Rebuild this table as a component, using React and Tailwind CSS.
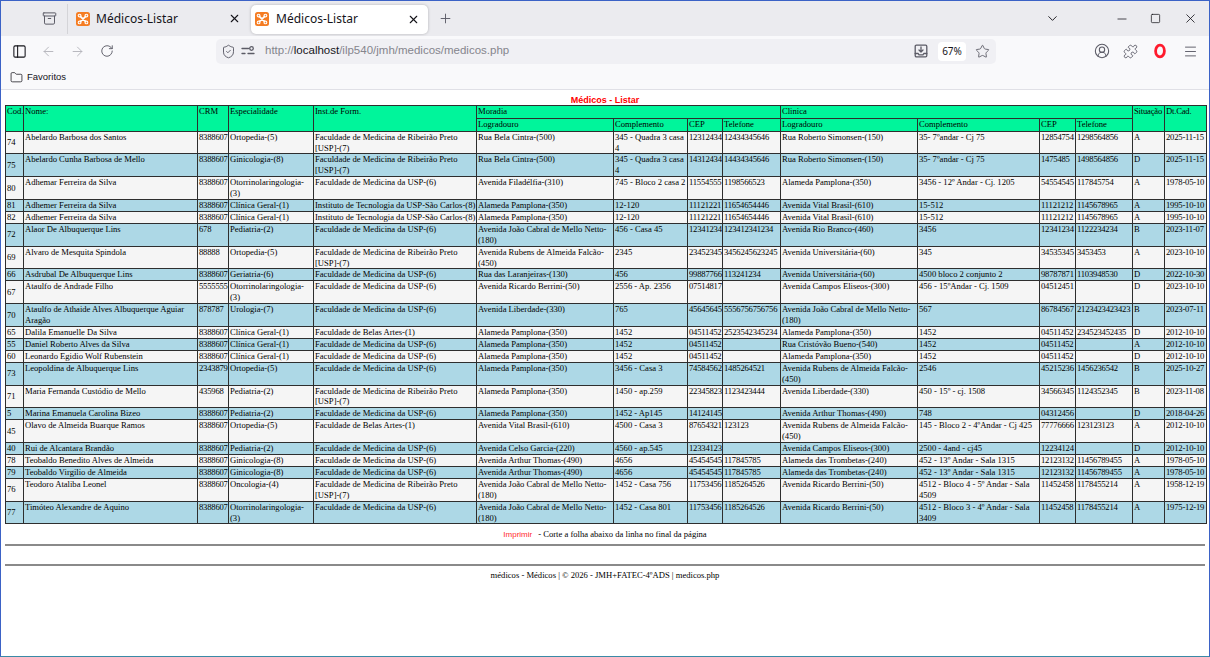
import React from "react";
import {
  Archive,
  X,
  Plus,
  ChevronDown,
  Minus,
  Square,
  PanelLeft,
  ArrowLeft,
  ArrowRight,
  RotateCw,
  ShieldCheck,
  Star,
  CircleUserRound,
  Puzzle,
  Menu,
  Folder,
} from "lucide-react";

const rows = [
  ["74","Abelardo Barbosa dos Santos","8388607","Ortopedia-(5)","Faculdade de Medicina de Ribeirão Preto [USP]-(7)","Rua Bela Cintra-(500)","345 - Quadra 3 casa 4","12312434","12434345646","Rua Roberto Simonsen-(150)","35- 7ºandar - Cj 75","12854754","1298564856","A","2025-11-15"],
  ["75","Abelardo Cunha Barbosa de Mello","8388607","Ginicologia-(8)","Faculdade de Medicina de Ribeirão Preto [USP]-(7)","Rua Bela Cintra-(500)","345 - Quadra 3 casa 4","14312434","14434345646","Rua Roberto Simonsen-(150)","35- 7ºandar - Cj 75","1475485","1498564856","D","2025-11-15"],
  ["80","Adhemar Ferreira da Silva","8388607","Otorrinolaringologia-(3)","Faculdade de Medicina da USP-(6)","Avenida Filadélfia-(310)","745 - Bloco 2 casa 2","11554555","1198566523","Alameda Pamplona-(350)","3456 - 12º Andar - Cj. 1205","54554545","117845754","A","1978-05-10"],
  ["81","Adhemer Ferreira da Silva","8388607","Clínica Geral-(1)","Instituto de Tecnologia da USP-São Carlos-(8)","Alameda Pamplona-(350)","12-120","11121221","11654654446","Avenida Vital Brasil-(610)","15-512","11121212","1145678965","A","1995-10-10"],
  ["82","Adhemer Ferreira da Silva","8388607","Clínica Geral-(1)","Instituto de Tecnologia da USP-São Carlos-(8)","Alameda Pamplona-(350)","12-120","11121221","11654654446","Avenida Vital Brasil-(610)","15-512","11121212","1145678965","A","1995-10-10"],
  ["72","Alaor De Albuquerque Lins","678","Pediatria-(2)","Faculdade de Medicina da USP-(6)","Avenida João Cabral de Mello Netto-(180)","456 - Casa 45","12341234","123412341234","Avenida Rio Branco-(460)","3456","12341234","1122234234","B","2023-11-07"],
  ["69","Alvaro de Mesquita Spindola","88888","Ortopedia-(5)","Faculdade de Medicina de Ribeirão Preto [USP]-(7)","Avenida Rubens de Almeida Falcão-(450)","2345","23452345","3456245623245","Avenida Universitária-(60)","345","34535345","3453453","A","2023-10-10"],
  ["66","Asdrubal De Albuquerque Lins","8388607","Geriatria-(6)","Faculdade de Medicina da USP-(6)","Rua das Laranjeiras-(130)","456","99887766","113241234","Avenida Universitária-(60)","4500 bloco 2 conjunto 2","98787871","1103948530","D","2022-10-30"],
  ["67","Ataulfo de Andrade Filho","5555555","Otorrinolaringologia-(3)","Faculdade de Medicina da USP-(6)","Avenida Ricardo Berrini-(50)","2556 - Ap. 2356","07514817","","Avenida Campos Eliseos-(300)","456 - 15ºAndar - Cj. 1509","04512451","","D","2023-10-10"],
  ["70","Ataulfo de Athaide Alves Albuquerque Aguiar Aragão","878787","Urologia-(7)","Faculdade de Medicina da USP-(6)","Avenida Liberdade-(330)","765","45645645","5556756756756","Avenida João Cabral de Mello Netto-(180)","567","86784567","2123423423423","B","2023-07-11"],
  ["65","Dalila Emanuelle Da Silva","8388607","Clínica Geral-(1)","Faculdade de Belas Artes-(1)","Alameda Pamplona-(350)","1452","04511452","2523542345234","Alameda Pamplona-(350)","1452","04511452","234523452435","D","2012-10-10"],
  ["55","Daniel Roberto Alves da Silva","8388607","Clínica Geral-(1)","Faculdade de Medicina da USP-(6)","Alameda Pamplona-(350)","1452","04511452","","Rua Cristóvão Bueno-(540)","1452","04511452","","A","2012-10-10"],
  ["60","Leonardo Egidio Wolf Rubenstein","8388607","Clínica Geral-(1)","Faculdade de Medicina da USP-(6)","Alameda Pamplona-(350)","1452","04511452","","Alameda Pamplona-(350)","1452","04511452","","D","2012-10-10"],
  ["73","Leopoldina de Albuquerque Lins","2343879","Ortopedia-(5)","Faculdade de Medicina da USP-(6)","Alameda Pamplona-(350)","3456 - Casa 3","74584562","1485264521","Avenida Rubens de Almeida Falcão-(450)","2546","45215236","1456236542","B","2025-10-27"],
  ["71","Maria Fernanda Custódio de Mello","435968","Pediatria-(2)","Faculdade de Medicina de Ribeirão Preto [USP]-(7)","Alameda Pamplona-(350)","1450 - ap.259","22345823","1123423444","Avenida Liberdade-(330)","450 - 15º - cj. 1508","34566345","1124352345","B","2023-11-08"],
  ["5","Marina Emanuela Carolina Bizeo","8388607","Pediatria-(2)","Faculdade de Medicina da USP-(6)","Alameda Pamplona-(350)","1452 - Ap145","14124145","","Avenida Arthur Thomas-(490)","748","04312456","","D","2018-04-26"],
  ["45","Olavo de Almeida Buarque Ramos","8388607","Ortopedia-(5)","Faculdade de Belas Artes-(1)","Avenida Vital Brasil-(610)","4500 - Casa 3","87654321","123123","Avenida Rubens de Almeida Falcão-(450)","145 - Bloco 2 - 4ºAndar - Cj 425","77776666","123123123","A","2012-10-10"],
  ["40","Rui de Alcantara Brandão","8388607","Pediatria-(2)","Faculdade de Medicina da USP-(6)","Avenida Celso Garcia-(220)","4560 - ap.545","12334123","","Avenida Campos Eliseos-(300)","2500 - 4and - cj45","12234124","","D","2012-10-10"],
  ["78","Teobaldo Benedito Alves de Almeida","8388607","Ginicologia-(8)","Faculdade de Medicina da USP-(6)","Avenida Arthur Thomas-(490)","4656","45454545","117845785","Alameda das Trombetas-(240)","452 - 13º Andar - Sala 1315","12123132","11456789455","A","1978-05-10"],
  ["79","Teobaldo Virgilio de Almeida","8388607","Ginicologia-(8)","Faculdade de Medicina da USP-(6)","Avenida Arthur Thomas-(490)","4656","45454545","117845785","Alameda das Trombetas-(240)","452 - 13º Andar - Sala 1315","12123132","11456789455","A","1978-05-10"],
  ["76","Teodoro Ataliba Leonel","8388607","Oncologia-(4)","Faculdade de Medicina de Ribeirão Preto [USP]-(7)","Avenida João Cabral de Mello Netto-(180)","1452 - Casa 756","11753456","1185264526","Avenida Ricardo Berrini-(50)","4512 - Bloco 4 - 5º Andar - Sala 4509","11452458","1178455214","A","1958-12-19"],
  ["77","Timóteo Alexandre de Aquino","8388607","Otorrinolaringologia-(3)","Faculdade de Medicina da USP-(6)","Avenida João Cabral de Mello Netto-(180)","1452 - Casa 801","11753456","1185264526","Avenida Ricardo Berrini-(50)","4512 - Bloco 3 - 4º Andar - Sala 3409","11452458","1178455214","A","1975-12-19"],
];

const numCols = [2, 7, 8, 11, 12, 13, 14];

const cell = "border border-[#2e2e2e] pl-px pr-0 py-0 align-top text-left font-normal";
const cellNum = "border border-[#2e2e2e] pl-px pr-0 py-0 align-top text-left font-normal whitespace-nowrap tracking-[-0.2px] overflow-hidden";
const cellMid = "border border-[#2e2e2e] pl-px pr-0 py-0 align-middle text-left font-normal whitespace-nowrap";

function Favicon() {
  return (
    <svg width="14" height="14" viewBox="0 0 14 14" className="shrink-0">
      <rect x="0" y="0" width="14" height="14" rx="2.5" fill="#f57c22" />
      <path d="M4.3 4.3 L9.7 9.7 M9.7 4.3 L4.3 9.7" stroke="#fff" strokeWidth="1.7" strokeLinecap="round" />
      <circle cx="3.6" cy="3.6" r="1.4" fill="none" stroke="#fff" strokeWidth="1.1" />
      <circle cx="10.4" cy="3.6" r="1.4" fill="none" stroke="#fff" strokeWidth="1.1" />
      <circle cx="3.6" cy="10.4" r="1.4" fill="none" stroke="#fff" strokeWidth="1.1" />
      <circle cx="10.4" cy="10.4" r="1.4" fill="none" stroke="#fff" strokeWidth="1.1" />
    </svg>
  );
}

function PermIcon() {
  return (
    <svg width="16" height="16" viewBox="0 0 16 16" fill="none" stroke="#5b5b66" strokeWidth="1.3" strokeLinecap="round">
      <path d="M2 5.5h6.5" />
      <circle cx="11.5" cy="5.5" r="1.8" />
      <path d="M2 10.5h3" />
      <path d="M8 10.5h6" />
    </svg>
  );
}

function DownloadIcon() {
  return (
    <svg width="16" height="16" viewBox="0 0 16 16" fill="none" stroke="#5b5b66" strokeWidth="1.3" strokeLinecap="round" strokeLinejoin="round">
      <rect x="2.2" y="2.2" width="11.6" height="11.6" rx="1.2" />
      <path d="M2.2 10.5h3l.8 1.3h4l.8-1.3h3" />
      <path d="M8 4v5M6 7l2 2 2-2" />
    </svg>
  );
}

function OperaIcon() {
  return (
    <svg width="14" height="16" viewBox="0 0 14 16">
      <ellipse cx="7" cy="8" rx="4.4" ry="5.8" fill="none" stroke="#ff1b2d" strokeWidth="2.8" />
    </svg>
  );
}

function Tab({ active }) {
  return (
    <div
      className={
        active
          ? "flex items-center w-[177px] h-[29px] bg-white rounded-[5px] shadow-[0_0_3px_rgba(0,0,0,0.25)] pl-[4px] pr-[8px]"
          : "flex items-center w-[178px] h-[29px] pl-[6px] pr-[7px]"
      }
    >
      <Favicon />
      <span className={active ? "ml-[7px] text-[12px] text-[#15141a] flex-1" : "ml-[6px] text-[12px] text-[#15141a] flex-1"}>
        Médicos-Listar
      </span>
      <X size={13} strokeWidth={2} className="text-[#15141a]" />
    </div>
  );
}

export default function App() {
  return (
    <div className="w-[1210px] h-[657px] overflow-hidden flex flex-col bg-white border border-[#3b62c6] border-b-[#3a8aa6] font-['Noto_Sans',sans-serif]">
      {/* Tab strip */}
      <div className="h-[35px] shrink-0 bg-[#ebebef] flex items-center">
        <div className="w-[38px]" />
        <div className="w-[20px] flex justify-center">
          <Archive size={15} strokeWidth={1.6} className="text-[#5b5b66]" />
        </div>
        <div className="ml-[8px] w-px h-[30px] bg-[#d4d4d8]" />
        <div className="ml-[2px]">
          <Tab />
        </div>
        <div className="ml-[3px] mt-[1px]">
          <Tab active />
        </div>
        <div className="ml-[9px] w-[16px] flex justify-center">
          <Plus size={15} strokeWidth={1.5} className="text-[#5b5b66]" />
        </div>
        <div className="flex-1" />
        <div className="w-[30px] flex justify-center">
          <ChevronDown size={15} strokeWidth={1.5} className="text-[#15141a]" />
        </div>
        <div className="w-[38px]" />
        <div className="w-[34px] flex justify-center">
          <Minus size={14} strokeWidth={1.3} className="text-[#15141a]" />
        </div>
        <div className="w-[32px] flex justify-center">
          <Square size={11} strokeWidth={1.6} className="text-[#15141a]" />
        </div>
        <div className="w-[38px] flex justify-center">
          <X size={15} strokeWidth={1.3} className="text-[#15141a]" />
        </div>
      </div>

      {/* Toolbar */}
      <div className="h-[30px] shrink-0 bg-[#f9f9fb] flex items-center">
        <div className="w-[4px]" />
        <div className="w-[29px] flex justify-center">
          <PanelLeft size={15} strokeWidth={1.7} className="text-[#15141a]" />
        </div>
        <div className="w-[29px] flex justify-center">
          <ArrowLeft size={15} strokeWidth={1.5} className="text-[#b4b4bb]" />
        </div>
        <div className="w-[29px] flex justify-center">
          <ArrowRight size={15} strokeWidth={1.5} className="text-[#b4b4bb]" />
        </div>
        <div className="w-[29px] flex justify-center">
          <RotateCw size={14} strokeWidth={1.6} className="text-[#5b5b66]" />
        </div>
        <div className="w-[95px]" />
        <div className="w-[780px] h-[25px] rounded-[5px] bg-[#f0f0f4] flex items-center">
          <div className="w-[4px]" />
          <div className="w-[16px] flex justify-center">
            <ShieldCheck size={15} strokeWidth={1.5} className="text-[#5b5b66]" />
          </div>
          <div className="ml-[4px] w-[16px] flex justify-center">
            <PermIcon />
          </div>
          <div className="ml-[9px] text-[11.5px] text-[#85858d] whitespace-nowrap font-['Liberation_Sans',sans-serif]">
            http://<span className="text-[#15141a]">localhost</span>/ilp540/jmh/medicos/medicos.php
          </div>
          <div className="flex-1" />
          <div className="w-[16px] flex justify-center">
            <DownloadIcon />
          </div>
          <div className="ml-[9px] w-[28px] h-[19px] rounded-[4px] bg-white flex items-center justify-center text-[10px] text-[#15141a]">
            67%
          </div>
          <div className="ml-[8px] w-[16px] flex justify-center">
            <Star size={15} strokeWidth={1.4} className="text-[#5b5b66]" />
          </div>
          <div className="w-[6px]" />
        </div>
        <div className="flex-1" />
        <div className="w-[29px] flex justify-center">
          <CircleUserRound size={16} strokeWidth={1.6} className="text-[#5b5b66]" />
        </div>
        <div className="w-[29px] flex justify-center">
          <Puzzle size={15} strokeWidth={1.5} className="text-[#5b5b66]" />
        </div>
        <div className="w-[30px] flex justify-center">
          <OperaIcon />
        </div>
        <div className="w-[30px] flex justify-center">
          <Menu size={15} strokeWidth={1.5} className="text-[#5b5b66]" />
        </div>
        <div className="w-[4px]" />
      </div>

      {/* Bookmarks bar */}
      <div className="h-[24px] shrink-0 bg-[#f9f9fb] border-b border-[#e0e0e6] flex items-center pl-[9px]">
        <Folder size={13} strokeWidth={1.4} className="text-[#15141a]" />
        <span className="ml-[4px] text-[9.5px] text-[#15141a] font-['Liberation_Sans',sans-serif]">Favoritos</span>
      </div>

      {/* Page content */}
      <div className="flex-1 bg-white overflow-hidden">
        <div className="pt-[5px] text-center text-[9px] leading-[10px] font-bold text-[#ff0000] font-['Liberation_Sans',sans-serif]">
          Médicos - Listar
        </div>
        <div className="pl-[4px]">
          <table className="table-fixed w-[1201px] border-collapse bg-[#f5f5f5] text-black text-[8.6px] leading-[10.9px] font-['Liberation_Serif',serif]">
            <colgroup>
              <col className="w-[18px]" />
              <col className="w-[174px]" />
              <col className="w-[31px]" />
              <col className="w-[85px]" />
              <col className="w-[163px]" />
              <col className="w-[137px]" />
              <col className="w-[74px]" />
              <col className="w-[35px]" />
              <col className="w-[58px]" />
              <col className="w-[137px]" />
              <col className="w-[122px]" />
              <col className="w-[36px]" />
              <col className="w-[57px]" />
              <col className="w-[32px]" />
              <col className="w-[42px]" />
            </colgroup>
            <thead className="bg-[#00f59b] leading-[11.8px]">
              <tr>
                <th rowSpan={2} className={cell}>Cod.</th>
                <th rowSpan={2} className={cell}>Nome:</th>
                <th rowSpan={2} className={cell}>CRM</th>
                <th rowSpan={2} className={cell}>Especialidade</th>
                <th rowSpan={2} className={cell}>Inst.de Form.</th>
                <th colSpan={4} className={cell}>Moradia</th>
                <th colSpan={4} className={cell}>Clinica</th>
                <th rowSpan={2} className={cellNum}>Situação</th>
                <th rowSpan={2} className={cellNum}>Dt.Cad.</th>
              </tr>
              <tr>
                <th className={cell}>Logradouro</th>
                <th className={cell}>Complemento</th>
                <th className={cell}>CEP</th>
                <th className={cell}>Telefone</th>
                <th className={cell}>Logradouro</th>
                <th className={cell}>Complemento</th>
                <th className={cell}>CEP</th>
                <th className={cell}>Telefone</th>
              </tr>
            </thead>
            <tbody>
              {rows.map((r, i) => (
                <tr key={i} className={i % 2 === 0 ? "bg-[#f5f5f5]" : "bg-[#add8e6]"}>
                  {r.map((c, j) => (
                    <td key={j} className={j === 0 ? cellMid : numCols.includes(j) ? cellNum : cell}>
                      {c}
                    </td>
                  ))}
                </tr>
              ))}
            </tbody>
          </table>
        </div>
        <div className="mt-[5px] text-center text-[8.6px] leading-[11px] text-black font-['Liberation_Serif',serif]">
          <span className="text-[#ff2a2a] text-[8px] font-['Liberation_Sans',sans-serif]">Imprimir</span>
          <span className="ml-[6px]">- Corte a folha abaixo da linha no final da página</span>
        </div>
        <div className="mx-[4px] mt-[4px] border-t-2 border-[#8a8a8a]" />
        <div className="mx-[4px] mt-[18px] border-t-2 border-[#8a8a8a]" />
        <div className="mt-[4px] text-center text-[8.6px] leading-[11px] text-black font-['Liberation_Serif',serif]">
          médicos - Médicos | © 2026 - JMH+FATEC-4ºADS | medicos.php
        </div>
      </div>
    </div>
  );
}
